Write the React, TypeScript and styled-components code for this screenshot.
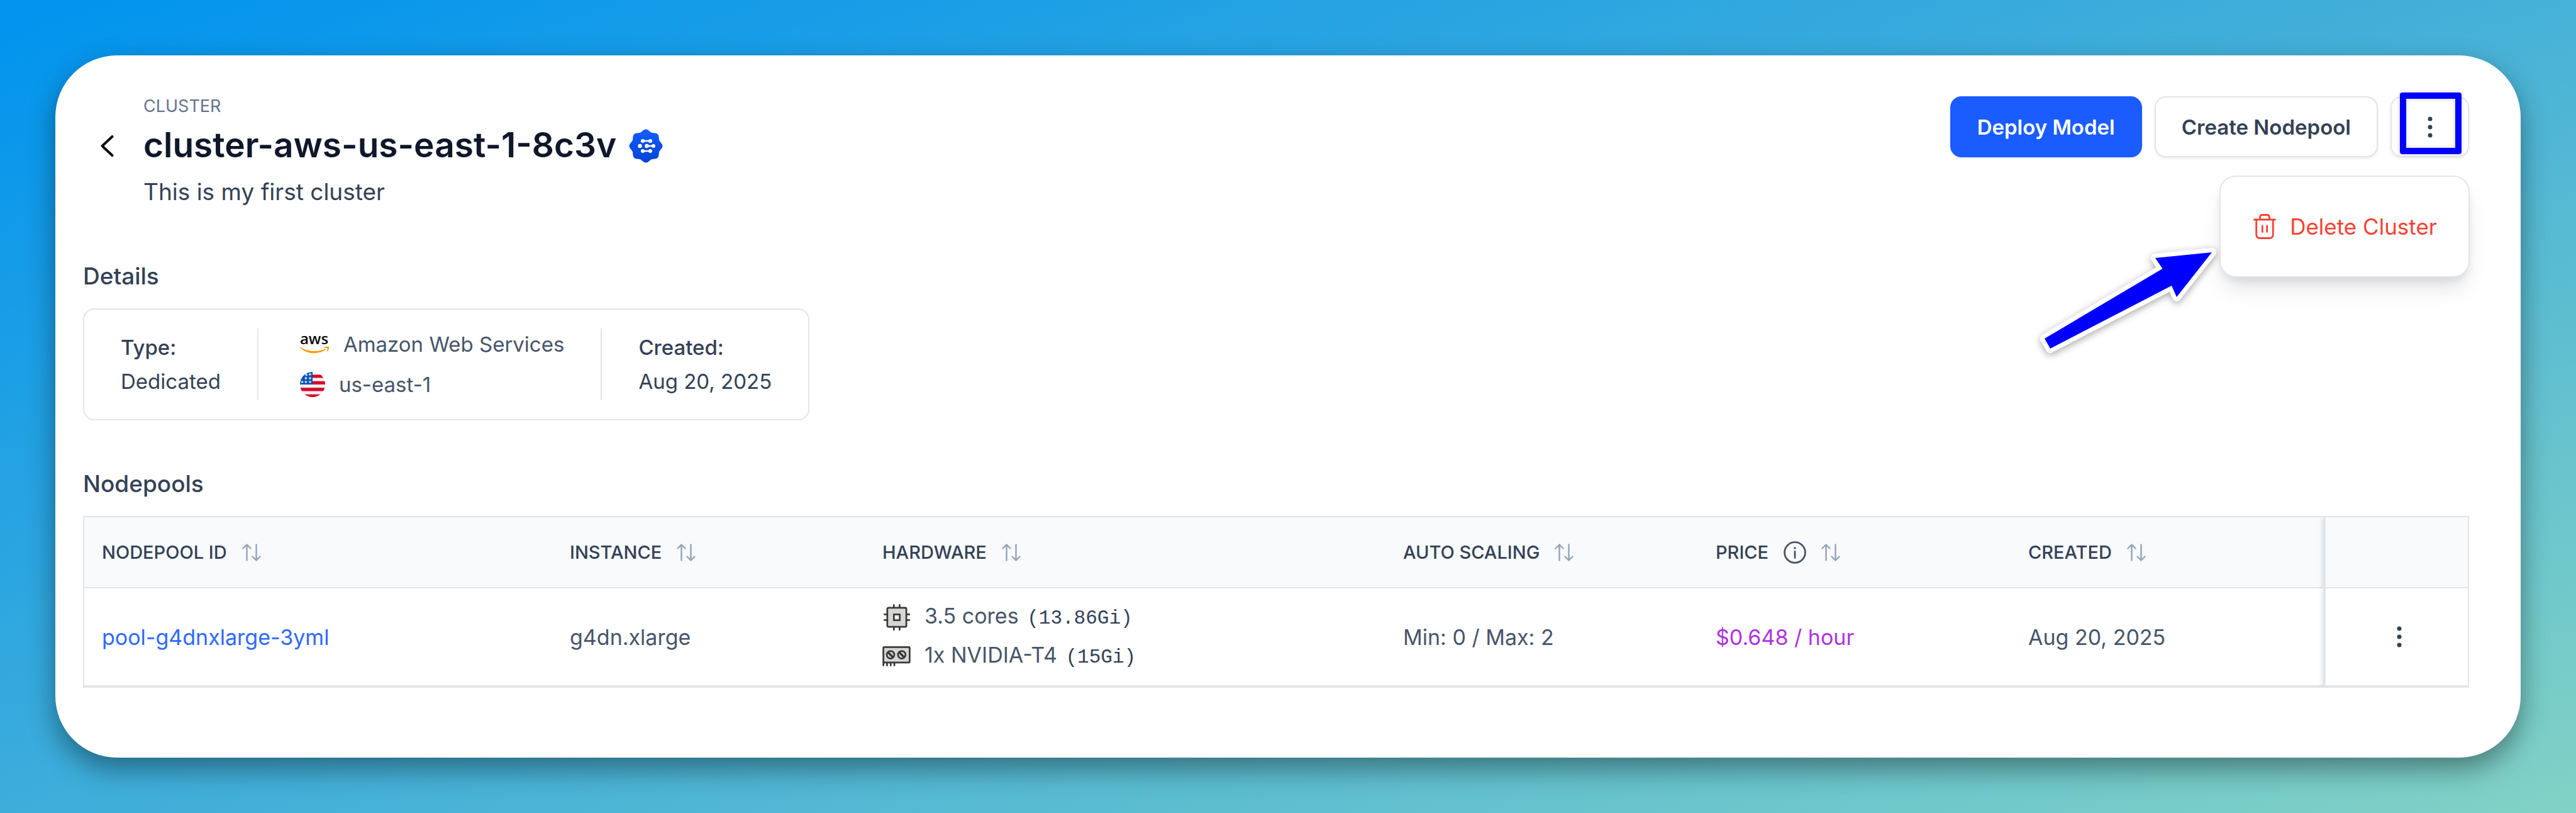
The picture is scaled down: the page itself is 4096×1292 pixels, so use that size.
import React from "react";
import styled, { createGlobalStyle, css } from "styled-components";

const color = {
  title: "#0f172a",
  text: "#334155",
  body: "#475569",
  muted: "#64748b",
  icon: "#94a3b8",
  border: "#e2e5eb",
  headerBg: "#f8fafc",
  primary: "#1a5cff",
  link: "#2f69ff",
  price: "#ad33e3",
  danger: "#f44336",
  marker: "#0000ff",
};

const sans = `Inter, "Liberation Sans", sans-serif`;
const mono = `"Liberation Mono", "DejaVu Sans Mono", monospace`;

const GlobalStyle = createGlobalStyle`
  *, *::before, *::after { box-sizing: border-box; }
  body { margin: 0; font-family: ${sans}; color: ${color.text}; }
  h1, h2, p { margin: 0; }
  button { font-family: inherit; cursor: pointer; }
  svg { display: block; flex: none; }
`;

const Page = styled.div`
  display: flex;
  min-height: 100vh;
  padding: 88px;
  background: linear-gradient(160deg, #0093ef 0%, #42afd9 50%, #82d2c5 100%);
`;

const Panel = styled.main`
  flex: 1;
  min-width: 0;
  padding: 65px 82px 109px 44px;
  border-radius: 98px;
  background: #fff;
  box-shadow: 0 18px 44px rgba(0, 0, 0, 0.4);
`;

const Header = styled.header`
  display: flex;
  justify-content: space-between;
  align-items: flex-start;
`;

const Heading = styled.div`
  display: grid;
  grid-template-columns: 76px auto;
  gap: 12px 20px;
`;

const Eyebrow = styled.p`
  grid-column: 2;
  font-size: 27px;
  line-height: 32px;
  color: ${color.muted};
`;

const BackButton = styled.button`
  display: flex;
  justify-content: center;
  align-items: center;
  padding: 0;
  border: 0;
  background: none;
`;

const TitleRow = styled.div`
  display: flex;
  align-items: center;
  gap: 20px;
  height: 70px;
`;

const Title = styled.h1`
  padding-bottom: 4px;
  font-size: 55px;
  font-weight: 600;
  line-height: 66px;
  color: ${color.title};
`;

const Description = styled.p`
  grid-column: 2;
  font-size: 37px;
  line-height: 52px;
`;

const Actions = styled.div`
  position: relative;
  display: flex;
  gap: 20px;
`;

const ActionButton = styled.button<{ $primary?: boolean; $icon?: boolean }>`
  display: flex;
  justify-content: center;
  align-items: center;
  height: 97px;
  padding: 0 41px;
  border: 2px solid ${color.border};
  border-radius: 18px;
  background: #fff;
  box-shadow: 0 2px 4px rgba(15, 23, 42, 0.08);
  font-size: 33px;
  font-weight: 600;
  color: ${color.text};
  ${(p) =>
    p.$primary &&
    css`
      border-color: ${color.primary};
      background: ${color.primary};
      color: #fff;
    `}
  ${(p) =>
    p.$icon &&
    css`
      width: 125px;
      padding: 0;
    `}
`;

const Highlight = styled.span`
  position: absolute;
  top: -6px;
  right: 12px;
  width: 98px;
  height: 98px;
  border: 10px solid ${color.marker};
  border-radius: 4px;
  box-shadow: 0 0 6px rgba(0, 0, 0, 0.2), inset 0 0 6px rgba(0, 0, 0, 0.2);
  pointer-events: none;
`;

const Menu = styled.div`
  position: absolute;
  top: 126px;
  right: -1px;
  padding: 4px;
  border: 2px solid ${color.border};
  border-radius: 26px;
  background: #fff;
  box-shadow: 0 24px 36px -8px rgba(15, 23, 42, 0.12), 0 8px 14px -4px rgba(15, 23, 42, 0.1);
`;

const MenuItem = styled.button`
  display: flex;
  align-items: center;
  gap: 22px;
  height: 150px;
  padding: 0 46px 0 48px;
  border: 0;
  background: none;
  font-size: 35px;
  white-space: nowrap;
  color: ${color.danger};
`;

const Pointer = styled.svg`
  position: absolute;
  top: 233px;
  right: 390px;
  overflow: visible;
  filter: drop-shadow(0 3px 6px rgba(0, 0, 0, 0.35));
  pointer-events: none;
`;

const Section = styled.section<{ $gap: number }>`
  margin-top: ${(p) => p.$gap}px;
`;

const SectionTitle = styled.h2`
  margin-bottom: 26px;
  font-size: 37px;
  font-weight: 500;
  line-height: 50px;
`;

const DetailsCard = styled.div`
  display: inline-flex;
  vertical-align: top;
  padding: 30px 0;
  border: 2px solid ${color.border};
  border-radius: 18px;
`;

const DetailsColumn = styled.div<{ $gap: number; $inset?: boolean }>`
  display: flex;
  flex-direction: column;
  justify-content: center;
  gap: ${(p) => p.$gap}px;
  min-height: 114px;
  padding: 0 58px;
  font-size: 33px;
  line-height: 44px;
  & + & {
    border-left: 2px solid ${color.border};
  }
  ${(p) => p.$inset && css`padding-left: 66px;`}
`;

const Label = styled.span`
  font-weight: 500;
`;

const Provider = styled.span`
  display: flex;
  align-items: center;
  gap: 22px;
  height: 44px;
  color: ${color.body};
`;

const TableFrame = styled.div`
  border: 2px solid ${color.border};
`;

const Table = styled.table`
  width: 100%;
  table-layout: fixed;
  border-spacing: 0;
  border-collapse: separate;
`;

const Column = styled.col<{ $width: number }>`
  width: ${(p) => p.$width}px;
`;

const HeadCell = styled.th`
  height: 113px;
  padding: 0 28px;
  border-bottom: 2px solid ${color.border};
  background: ${color.headerBg};
  text-align: left;
  font-size: 29px;
  font-weight: 500;
`;

const HeadContent = styled.span`
  display: flex;
  align-items: center;
  gap: 24px;
`;

const SortButton = styled.button`
  padding: 0;
  border: 0;
  background: none;
`;

const Cell = styled.td<{ $color?: string }>`
  height: 156px;
  padding: 0 28px;
  border-bottom: 2px solid ${color.border};
  background: #fff;
  font-size: 34px;
  color: ${(p) => p.$color ?? color.body};
`;

const pinned = css`
  position: relative;
  padding: 0 0 0 8px;
  border-left: 4px solid ${color.border};
  box-shadow: -2px 2px 6px rgba(15, 23, 42, 0.12);
  clip-path: inset(0 0 0 -12px);
`;

const PinnedHead = styled(HeadCell)`
  ${pinned}
`;

const PinnedCell = styled(Cell)`
  ${pinned}
`;

const RowMenuButton = styled.button`
  display: flex;
  justify-content: center;
  align-items: center;
  width: 60px;
  height: 60px;
  margin: 0 auto;
  padding: 0;
  border: 0;
  background: none;
`;

const PoolLink = styled.a`
  color: ${color.link};
  text-decoration: none;
`;

const HardwareList = styled.div`
  display: grid;
  grid-template-columns: 45px auto;
  justify-content: start;
  align-items: center;
  justify-items: center;
  gap: 12px 22px;
  line-height: 46px;
`;

const HardwareText = styled.span`
  justify-self: start;
  white-space: nowrap;
`;

const Memory = styled.span`
  margin-left: 4px;
  font-family: ${mono};
  font-size: 31px;
  color: ${color.text};
`;

const Dots = () => (
  <svg width="8" height="34" viewBox="0 0 8 34" fill={color.text} aria-hidden="true">
    <circle cx="4" cy="4" r="3.5" />
    <circle cx="4" cy="17" r="3.5" />
    <circle cx="4" cy="30" r="3.5" />
  </svg>
);

const ChevronIcon = () => (
  <svg width="22" height="34" viewBox="0 0 22 34" fill="none" stroke="#0a0a0a" strokeWidth="4" strokeLinecap="round" strokeLinejoin="round" aria-hidden="true">
    <path d="M19.500 2 3.500 17 19.500 32" />
  </svg>
);

const scallop =
  Array.from({ length: 96 }, (_, i) => {
    const angle = (i / 96) * Math.PI * 2;
    const radius = 24.8 + 1.7 * Math.cos(8 * angle);
    const x = (27 + radius * Math.cos(angle)).toFixed(2);
    const y = (27 + radius * Math.sin(angle)).toFixed(2);
    return `${i ? "L" : "M"}${x} ${y}`;
  }).join("") + "Z";

const BadgeIcon = () => (
  <svg width="54" height="54" viewBox="0 0 54 54" aria-hidden="true">
    <defs>
      <linearGradient id="badge" x1="0" y1="0" x2="0" y2="1">
        <stop offset="0" stopColor="#155dfc" />
        <stop offset="1" stopColor="#0543d4" />
      </linearGradient>
    </defs>
    <path d={scallop} fill="url(#badge)" />
    <path d="M22 19h12M28.500 27H39M22 35h12" stroke="#fff" strokeWidth="2.400" />
    <g fill="#fff">
      <circle cx="22" cy="19" r="3" />
      <circle cx="34" cy="19" r="3" />
      <circle cx="17.500" cy="27" r="3.200" />
      <circle cx="28.500" cy="27" r="3.200" />
      <circle cx="39" cy="27" r="3" />
      <circle cx="22" cy="35" r="3" />
      <circle cx="34" cy="35" r="3" />
    </g>
  </svg>
);

const TrashIcon = () => (
  <svg width="36" height="40" viewBox="0 0 36 40" fill="none" stroke={color.danger} strokeWidth="2.800" strokeLinecap="round" strokeLinejoin="round" aria-hidden="true">
    <path d="M1.500 9h33M10.500 9V5.500q0-4 4-4h7q4 0 4 4V9M4.700 9v23.500q0 6 6 6h14.600q6 0 6-6V9M14.300 19v9.500M21.700 19v9.500" />
  </svg>
);

const AwsLogo = () => (
  <svg width="47" height="52" viewBox="0 -11 47 52" role="img" aria-label="aws">
    <text x="22.500" y="15" textAnchor="middle" fontFamily={`"Open Sans", "Noto Sans", sans-serif`} fontSize="24" fontWeight="600" fill="#0b0b0b">
      aws
    </text>
    <path d="M0.500 19.500Q10 26 22 26 32 26 40 22.500L40.800 23.800Q32 29.500 21.500 29.300 9 29 0 20.500Z" fill="#ff9900" />
    <path d="M38 20.200q4-2.300 8-1 .600 4-3 7.500-.600.300-.400-.500 1.600-3.600 1-4.900-2-.800-5.500-.300-.600-.300-.100-.800Z" fill="#ff9900" />
  </svg>
);

const star = (x: number, y: number) => (
  <path
    key={`${x}-${y}`}
    transform={`translate(${x} ${y})`}
    d="M0-36 9-11H35L14 5 22 30 0 14-22 30-14 5-35-11H-9Z"
  />
);

const FlagIcon = () => (
  <svg width="40" height="40" viewBox="0 0 512 512" role="img" aria-label="United States">
    <clipPath id="flag">
      <circle cx="256" cy="256" r="256" />
    </clipPath>
    <g clipPath="url(#flag)">
      <rect width="512" height="512" fill="#f0f0f0" />
      <path d="M245 56h267v67H245zM245 189h267v67H245zM0 323h512v67H0zM0 456h512v56H0z" fill="#d80027" />
      <path d="M0 0h256v256H0z" fill="#0052b4" />
      <g fill="#f0f0f0">
        {star(205, 50)}
        {star(130, 60)}
        {star(120, 130)}
        {star(205, 130)}
        {star(45, 205)}
        {star(120, 205)}
        {star(205, 205)}
      </g>
    </g>
  </svg>
);

const SortIcon = () => (
  <svg width="30" height="28" viewBox="0 0 30 28" fill="none" stroke={color.icon} strokeWidth="2.400" strokeLinecap="round" strokeLinejoin="round" aria-hidden="true">
    <path d="M7.500 26.500V1.500M1.500 7.500l6-6 6 6M22.500 1.500v25M16.500 20.500l6 6 6-6" />
  </svg>
);

const InfoIcon = () => (
  <svg width="36" height="36" viewBox="0 0 36 36" fill="none" stroke={color.body} strokeWidth="2.800" role="img" aria-label="Info">
    <circle cx="18" cy="18" r="16.400" />
    <path d="M18 16.500v10" strokeLinecap="round" />
    <circle cx="18" cy="11" r="1.800" fill={color.body} stroke="none" />
  </svg>
);

const CpuIcon = () => (
  <svg width="42" height="42" viewBox="0 0 43 43" fill="none" stroke="#3a3a36" strokeWidth="2.800" strokeLinecap="round" strokeLinejoin="round" aria-hidden="true">
    <path d="M16.700 1.500v5M26 1.500v5M16.700 37v5M26 37v5M1.500 16.700h5M1.500 26h5M37 16.700h5M37 26h5" />
    <rect x="6" y="6" width="31" height="31" rx="2" fill="#d6d6d6" />
    <rect x="16.700" y="16.700" width="9.600" height="9.600" fill="#f2f2f2" />
  </svg>
);

const GpuIcon = () => (
  <svg width="45" height="32" viewBox="0 0 46 33" fill="none" stroke="#3a3a36" strokeWidth="2.800" strokeLinecap="round" strokeLinejoin="round" aria-hidden="true">
    <rect x="1.500" y="1.500" width="43" height="25.200" rx="1" fill="#d6d6d6" />
    <path d="M1.500 26v5.500M7.500 27v4.500M13.500 27v4.500M19.500 27v4.500" />
    <circle cx="13.200" cy="14" r="6.200" />
    <circle cx="31.600" cy="14" r="6.200" />
    <path d="M9.500 10.300l7.400 7.400M27.900 10.300l7.400 7.400" strokeWidth="3.600" />
  </svg>
);

const columns: { label: string; info?: boolean; width: number }[] = [
  { label: "NODEPOOL ID", width: 744 },
  { label: "INSTANCE", width: 497 },
  { label: "HARDWARE", width: 828 },
  { label: "AUTO SCALING", width: 497 },
  { label: "PRICE", info: true, width: 497 },
  { label: "CREATED", width: 497 },
];

const pools = [
  {
    id: "pool-g4dnxlarge-3yml",
    instance: "g4dn.xlarge",
    cpu: "3.5 cores",
    cpuMemory: "(13.86Gi)",
    gpu: "1x NVIDIA-T4",
    gpuMemory: "(15Gi)",
    scaling: "Min: 0 / Max: 2",
    price: "$0.648 / hour",
    created: "Aug 20, 2025",
  },
];

export default function App() {
  return (
    <>
      <GlobalStyle />
      <Page>
        <Panel>
          <Header>
            <Heading>
              <Eyebrow>CLUSTER</Eyebrow>
              <BackButton aria-label="Back">
                <ChevronIcon />
              </BackButton>
              <TitleRow>
                <Title>cluster-aws-us-east-1-8c3v</Title>
                <BadgeIcon />
              </TitleRow>
              <Description>This is my first cluster</Description>
            </Heading>
            <Actions>
              <ActionButton $primary>Deploy Model</ActionButton>
              <ActionButton>Create Nodepool</ActionButton>
              <ActionButton $icon aria-label="Cluster actions" aria-expanded="true">
                <Dots />
              </ActionButton>
              <Highlight />
              <Menu role="menu">
                <MenuItem role="menuitem">
                  <TrashIcon />
                  Delete Cluster
                </MenuItem>
              </Menu>
              <Pointer width="300" height="190" viewBox="0 0 300 190" aria-hidden="true">
                <path
                  d="M281 15 191 24 202.500 41 15 152 24 168 217 68 225 86Z"
                  fill={color.marker}
                  stroke="#fff"
                  strokeWidth="14"
                  strokeLinejoin="round"
                  paintOrder="stroke"
                />
              </Pointer>
            </Actions>
          </Header>

          <Section $gap={83}>
            <SectionTitle>Details</SectionTitle>
            <DetailsCard>
              <DetailsColumn $gap={10}>
                <Label>Type:</Label>
                <span>Dedicated</span>
              </DetailsColumn>
              <DetailsColumn $gap={20} $inset>
                <Provider>
                  <AwsLogo />
                  Amazon Web Services
                </Provider>
                <Provider>
                  <FlagIcon />
                  us-east-1
                </Provider>
              </DetailsColumn>
              <DetailsColumn $gap={10}>
                <Label>Created:</Label>
                <span>Aug 20, 2025</span>
              </DetailsColumn>
            </DetailsCard>
          </Section>

          <Section $gap={76}>
            <SectionTitle>Nodepools</SectionTitle>
            <TableFrame>
              <Table>
                <colgroup>
                  {columns.map((c) => (
                    <Column key={c.label} $width={c.width} />
                  ))}
                  <Column $width={230} />
                </colgroup>
                <thead>
                  <tr>
                    {columns.map((c) => (
                      <HeadCell key={c.label} scope="col">
                        <HeadContent>
                          {c.label}
                          {c.info && <InfoIcon />}
                          <SortButton aria-label={`Sort by ${c.label}`}>
                            <SortIcon />
                          </SortButton>
                        </HeadContent>
                      </HeadCell>
                    ))}
                    <PinnedHead aria-label="Actions" />
                  </tr>
                </thead>
                <tbody>
                  {pools.map((p) => (
                    <tr key={p.id}>
                      <Cell>
                        <PoolLink href="#">{p.id}</PoolLink>
                      </Cell>
                      <Cell>{p.instance}</Cell>
                      <Cell>
                        <HardwareList>
                          <CpuIcon />
                          <HardwareText>
                            {p.cpu} <Memory>{p.cpuMemory}</Memory>
                          </HardwareText>
                          <GpuIcon />
                          <HardwareText>
                            {p.gpu} <Memory>{p.gpuMemory}</Memory>
                          </HardwareText>
                        </HardwareList>
                      </Cell>
                      <Cell>{p.scaling}</Cell>
                      <Cell $color={color.price}>{p.price}</Cell>
                      <Cell>{p.created}</Cell>
                      <PinnedCell>
                        <RowMenuButton aria-label="Nodepool actions">
                          <Dots />
                        </RowMenuButton>
                      </PinnedCell>
                    </tr>
                  ))}
                </tbody>
              </Table>
            </TableFrame>
          </Section>
        </Panel>
      </Page>
    </>
  );
}
